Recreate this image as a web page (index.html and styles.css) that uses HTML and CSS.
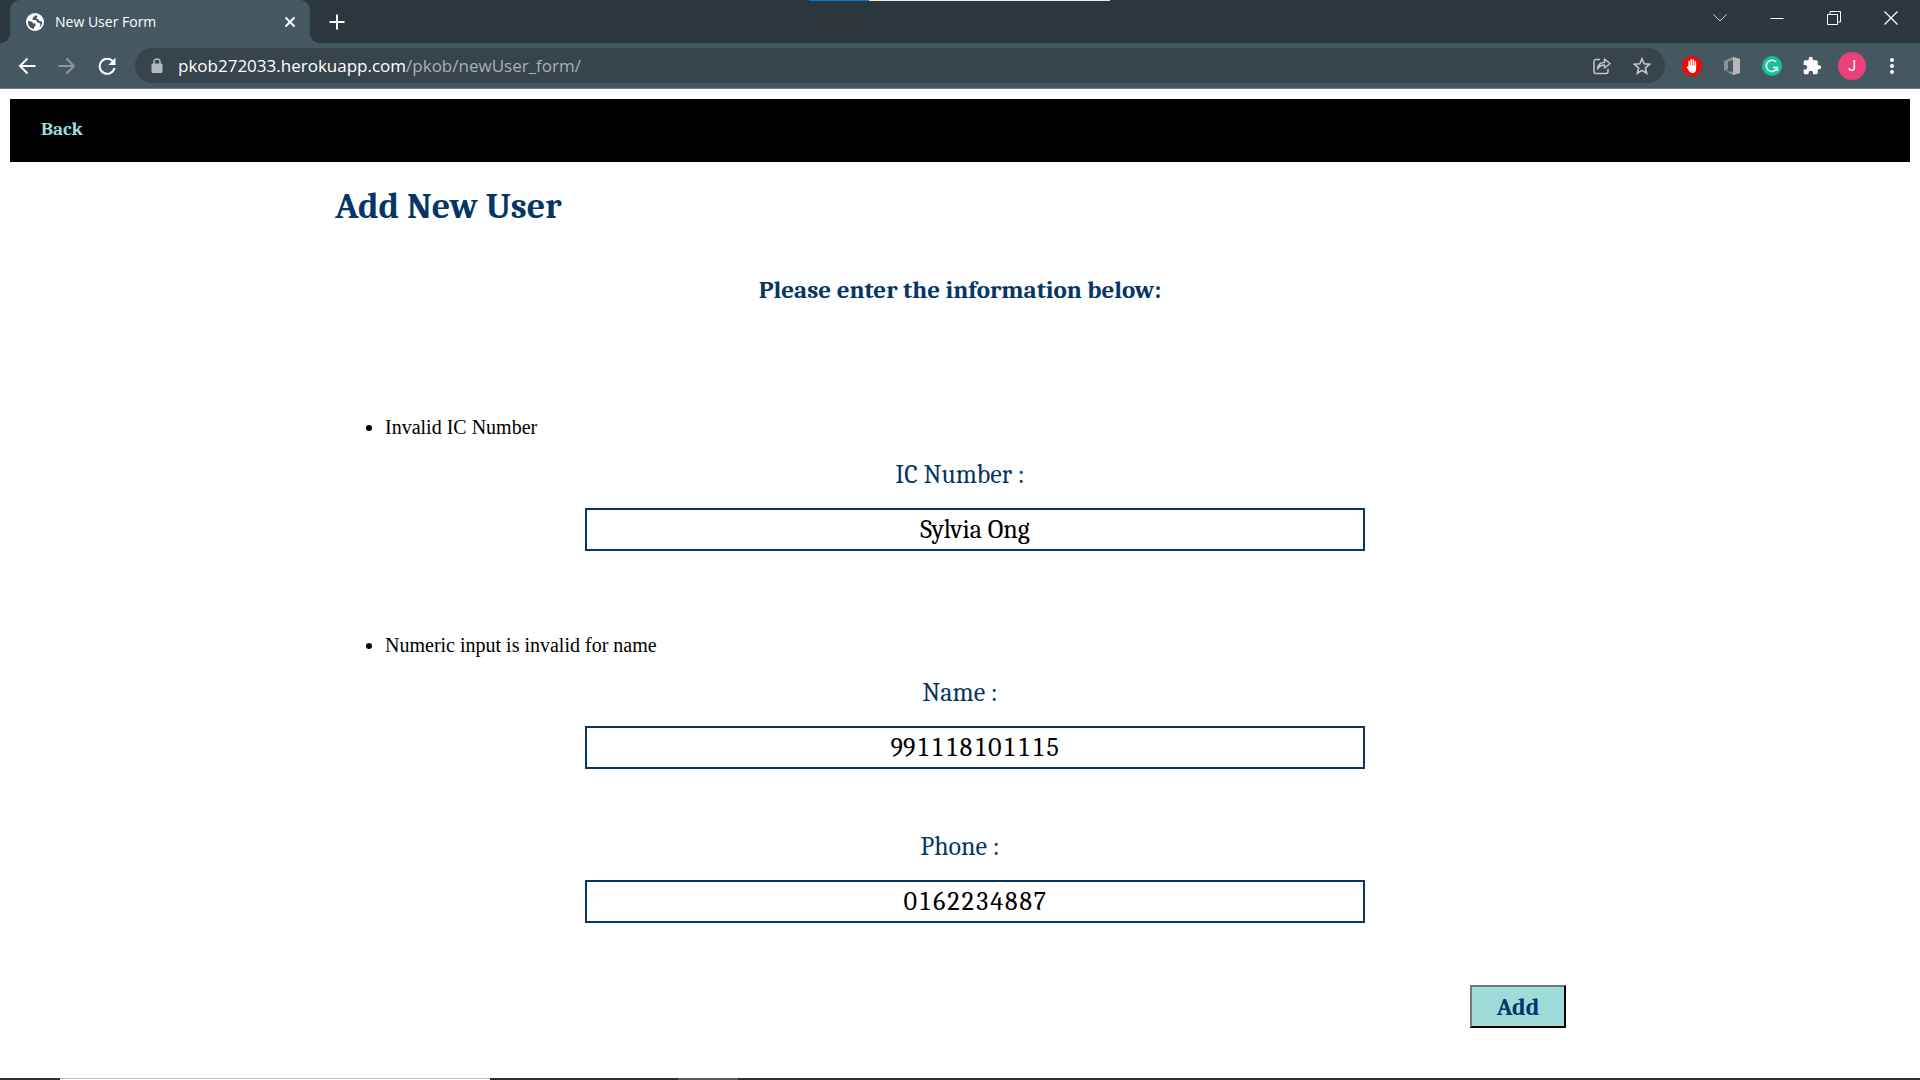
FILE: index.html
```html
<!DOCTYPE html>
<html lang="en">
<head>
<meta charset="utf-8">
<meta name="viewport" content="width=device-width, initial-scale=1">
<title>New User Form</title>
<link rel="stylesheet" href="styles.css">
</head>
<body>
<header class="browser">
  <div class="window-strip"></div>
  <div class="tab-bar">
    <div class="tab">
      <svg class="favicon" width="18" height="18" viewBox="0 0 18 18"><circle cx="9" cy="9" r="9" fill="#fff"/><path d="M2 8l3.500.5 2 2h2v2.500l-1.500 1v2C4.500 15.500 2 13 2 9.500zM10.500 2L7 4.500 6.500 7H10l1.500 2.500 2 .5 1 1-1 3.500C15.500 13 16.300 11 16 8.500L13.500 8 12 6l-2-.5 1.500-1.500z" fill="#455761"/></svg>
      <span class="tab-title">New User Form</span>
      <button class="tab-close" aria-label="Close tab"><svg width="12" height="12" viewBox="0 0 12 12"><path d="M1.500 1.500l9 9M10.500 1.500l-9 9" stroke="#fff" stroke-width="2"/></svg></button>
    </div>
    <button class="new-tab" aria-label="New tab"><svg width="16" height="16" viewBox="0 0 16 16"><path d="M8 .5v15M.5 8h15" stroke="#fff" stroke-width="2"/></svg></button>
    <div class="window-controls">
      <button aria-label="Search tabs"><svg width="14" height="14" viewBox="0 0 14 14"><path d="M.5 3.500L7 10l6.500-6.500" fill="none" stroke="#cfd3d5"/></svg></button>
      <button aria-label="Minimize"><svg width="14" height="14" viewBox="0 0 14 14"><path d="M.5 7.500h13" stroke="#fff"/></svg></button>
      <button aria-label="Restore"><svg width="14" height="14" viewBox="0 0 14 14"><path d="M.5 3.500h10v10H.5zM3 3V.5h10.500V11H11" fill="none" stroke="#fff"/></svg></button>
      <button aria-label="Close"><svg width="14" height="14" viewBox="0 0 14 14"><path d="M.5.5l13 13M13.500.5l-13 13" stroke="#fff" stroke-width="1.200"/></svg></button>
    </div>
  </div>
  <div class="toolbar">
    <button class="tool" aria-label="Back"><svg width="18" height="18" viewBox="0 0 18 18"><path d="M17.500 9H2M9.500 1.500L2 9l7.500 7.500" fill="none" stroke="#fff" stroke-width="2"/></svg></button>
    <button class="tool" aria-label="Forward"><svg width="18" height="18" viewBox="0 0 18 18"><path d="M.5 9H16M8.500 1.500L16 9l-7.500 7.500" fill="none" stroke="#8d979d" stroke-width="2"/></svg></button>
    <button class="tool" aria-label="Reload"><svg width="18" height="18" viewBox="0 0 18 18"><path d="M15 4.500A7.500 7.500 0 1 0 16.500 11" fill="none" stroke="#fff" stroke-width="2"/><path d="M17.500.8v7.200h-7.200z" fill="#fff"/></svg></button>
    <div class="address">
      <svg class="lock" width="12" height="16" viewBox="0 0 12 16"><path d="M3 6V4a3 3 0 0 1 6 0v2" fill="none" stroke="#b3b9bd" stroke-width="1.500"/><rect x=".5" y="5.500" width="11" height="9.500" rx="1.500" fill="#b3b9bd"/></svg>
      <div class="url">pkob272033.herokuapp.com<span class="path">/pkob/newUser_form/</span></div>
      <button class="tool" aria-label="Share"><svg width="18" height="18" viewBox="0 0 18 18"><path d="M7 2.500H3a2 2 0 0 0-2 2V14.500a2 2 0 0 0 2 2h10a2 2 0 0 0 2-2V12M4.500 12c.5-4 3-6.500 7-6.500V2L17 6.500 11.500 11V8C8.500 8 6 9.500 4.500 12z" fill="none" stroke="#c3c7ca" stroke-width="1.500" stroke-linejoin="round"/></svg></button>
      <button class="tool" aria-label="Bookmark"><svg width="18" height="18" viewBox="0 0 18 18"><path d="M9 1.800l2.100 5 5.500.5-4.200 3.600 1.300 5.400L9 13.400l-4.700 2.900 1.300-5.400-4.200-3.600 5.500-.5z" fill="none" stroke="#c3c7ca" stroke-width="1.600"/></svg></button>
    </div>
    <button class="tool" aria-label="Ad blocker"><svg width="20" height="20" viewBox="0 0 20 20"><path d="M6 0h8l6 6v8l-6 6H6l-6-6V6z" fill="#e80d0d"/><path d="M7.200 11V5.500M9.200 10V3.800M11.300 10V4M13.400 11V5.800" stroke="#fff" stroke-width="1.500" stroke-linecap="round"/><path d="M6.500 9.500h7.600V13c0 2.500-1.300 4-3.600 4-2 0-3-1-4-2.800L4.700 11q.8-1 1.800.5z" fill="#fff"/></svg></button>
    <button class="tool" aria-label="Office"><svg width="18" height="20" viewBox="0 0 18 20"><path d="M1 5l9-4 7 2v14l-7 2-8-4 8 1V4L5 5.500v8L1 15z" fill="#8e9294"/><path d="M10 1l7 2v14l-7 2z" fill="#b5b7b9"/></svg></button>
    <button class="tool" aria-label="Grammarly"><svg width="20" height="20" viewBox="0 0 20 20"><circle cx="10" cy="10" r="10" fill="#15c39a"/><path d="M14 6a5.600 5.600 0 1 0 1.300 5.500H11M15.300 11.500V15" fill="none" stroke="#fff" stroke-width="1.600"/></svg></button>
    <button class="tool" aria-label="Extensions"><svg width="20" height="20" viewBox="0 0 24 24"><path d="M20.500 11H19V7a2 2 0 0 0-2-2h-4V3.500a2.500 2.500 0 0 0-5 0V5H4a2 2 0 0 0-2 2v3.800h1.500a2.700 2.700 0 0 1 0 5.400H2V20a2 2 0 0 0 2 2h3.800v-1.500a2.700 2.700 0 0 1 5.400 0V22H17a2 2 0 0 0 2-2v-4h1.500a2.500 2.500 0 0 0 0-5z" fill="#fff"/></svg></button>
    <button class="tool" aria-label="Profile"><span class="avatar">J</span></button>
    <button class="tool" aria-label="Menu"><svg width="4" height="16" viewBox="0 0 4 16"><circle cx="2" cy="2" r="2" fill="#fff"/><circle cx="2" cy="8" r="2" fill="#fff"/><circle cx="2" cy="14" r="2" fill="#fff"/></svg></button>
  </div>
</header>

<div class="page">
  <nav class="navbar"><a href="#">Back</a></nav>
  <main class="content">
    <h1>Add New User</h1>
    <h2>Please enter the information below:</h2>
    <form class="user-form">
      <div class="field">
        <ul class="errors"><li>Invalid IC Number</li></ul>
        <label for="ic">IC Number :</label>
        <input id="ic" type="text" value="Sylvia Ong">
      </div>
      <div class="field">
        <ul class="errors"><li>Numeric input is invalid for name</li></ul>
        <label for="name">Name :</label>
        <input id="name" type="text" value="991118101115">
      </div>
      <div class="field">
        <label for="phone">Phone :</label>
        <input id="phone" type="text" value="0162234887">
      </div>
      <button class="submit" type="submit">Add</button>
    </form>
  </main>
</div>

<footer class="taskbar-edge"><span class="edge-active"></span><span class="edge-hover"></span></footer>
</body>
</html>
```

FILE: styles.css
```css
* { box-sizing: border-box; }

body {
  margin: 0;
  min-height: 100vh;
  display: flex;
  flex-direction: column;
  background: #fff;
  color: #000;
  font-family: "Liberation Serif", serif;
  font-size: 20px;
}

button {
  border: 0;
  padding: 0;
  background: none;
  font: inherit;
  color: inherit;
}

svg { display: block; }

/* Browser window */
.browser {
  position: relative;
  background: #455761;
  border-bottom: 1px solid #6c7d87;
  font-family: "Open Sans", sans-serif;
  color: #fff;
}

.window-strip {
  position: absolute;
  top: 0;
  left: 809px;
  width: 301px;
  height: 1px;
  background: linear-gradient(to right, #0078d7 60px, #e8e8e6 60px);
}

.tab-bar {
  display: flex;
  height: 43px;
  padding: 0 1px 0 10px;
  background: #2c373d;
}

.tab {
  position: relative;
  display: flex;
  align-items: center;
  gap: 11px;
  width: 300px;
  padding: 0 14px 0 16px;
  border-radius: 10px 10px 0 0;
  background: #455761;
  font-size: 14px;
}

.tab::before,
.tab::after {
  content: "";
  position: absolute;
  bottom: 0;
  width: 10px;
  height: 10px;
}

.tab::before {
  right: 100%;
  background: radial-gradient(circle at 0 0, #2c373d 10px, #455761 10px);
}

.tab::after {
  left: 100%;
  background: radial-gradient(circle at 100% 0, #2c373d 10px, #455761 10px);
}

.tab-title { flex: 1; }

.new-tab {
  display: grid;
  place-items: center;
  width: 54px;
}

.window-controls {
  display: flex;
  height: 36px;
  margin-left: auto;
}

.window-controls button {
  display: grid;
  place-items: center;
  width: 57px;
}

.toolbar {
  display: flex;
  align-items: center;
  height: 45px;
  padding: 0 8px 0 7px;
}

.tool {
  display: grid;
  place-items: center;
  flex: none;
  width: 40px;
  height: 35px;
}

.address {
  flex: 1;
  display: flex;
  align-items: center;
  height: 35px;
  margin: 0 7px 0 8px;
  padding: 0 3px 0 16px;
  border-radius: 18px;
  background: #38444b;
}

.url {
  flex: 1;
  margin-left: 15px;
  font-size: 17px;
}

.path { color: #a9b1b5; }

.avatar {
  display: grid;
  place-items: center;
  width: 28px;
  height: 28px;
  border-radius: 50%;
  background: #ec407a;
  font-family: Roboto, sans-serif;
  font-size: 14px;
}

/* Page */
.page {
  flex: 1;
  padding: 10px;
}

.navbar {
  height: 63px;
  padding: 18px 31px;
  background: #000;
}

.navbar a {
  color: #9fdcd9;
  font-family: Cambria, Caladea, "Liberation Serif", serif;
  font-size: 19px;
  font-weight: bold;
  line-height: 24px;
  text-decoration: none;
}

.content {
  max-width: 1250px;
  margin: 0 auto;
  color: #053666;
  font-family: Cambria, Caladea, "Liberation Serif", serif;
  font-variant-numeric: tabular-nums;
}

h1 {
  margin: 25px 0 0;
  font-size: 36px;
  line-height: 40px;
}

h2 {
  margin: 47px 0 0;
  font-size: 25px;
  line-height: 32px;
  text-align: center;
}

.user-form {
  display: flex;
  flex-direction: column;
  margin-top: 89px;
}

.field {
  display: flex;
  flex-direction: column;
  margin-bottom: 62px;
}

.errors {
  margin: 20px 0;
  padding-left: 50px;
  color: #000;
  font-family: "Liberation Serif", serif;
  font-size: 20px;
  line-height: 24px;
}

.field label {
  font-size: 26px;
  line-height: 32px;
  text-align: center;
}

.field input {
  width: 62.4%;
  height: 43px;
  margin: 17px 0 0 20%;
  padding: 0;
  border: 2px solid #053666;
  background: #fff;
  color: #000;
  font: inherit;
  font-size: 26px;
  font-variant-numeric: tabular-nums;
  text-align: center;
}

.submit {
  align-self: flex-end;
  width: 96px;
  height: 43px;
  margin-right: 19px;
  border: 2px outset #000;
  border-color: #767676 #212121 #212121 #767676;
  background: #9fdcd9;
  color: #053666;
  font-size: 24px;
  font-weight: bold;
}

/* Visible edge of the desktop taskbar */
.taskbar-edge {
  display: flex;
  gap: 188px;
  height: 2px;
  padding-left: 60px;
  background: #2f2d2e;
}

.edge-active {
  width: 430px;
  border-top: 1px solid #bdbdbd;
  background: #fff;
}

.edge-hover {
  width: 60px;
  background: #5c5a5b;
}
```
